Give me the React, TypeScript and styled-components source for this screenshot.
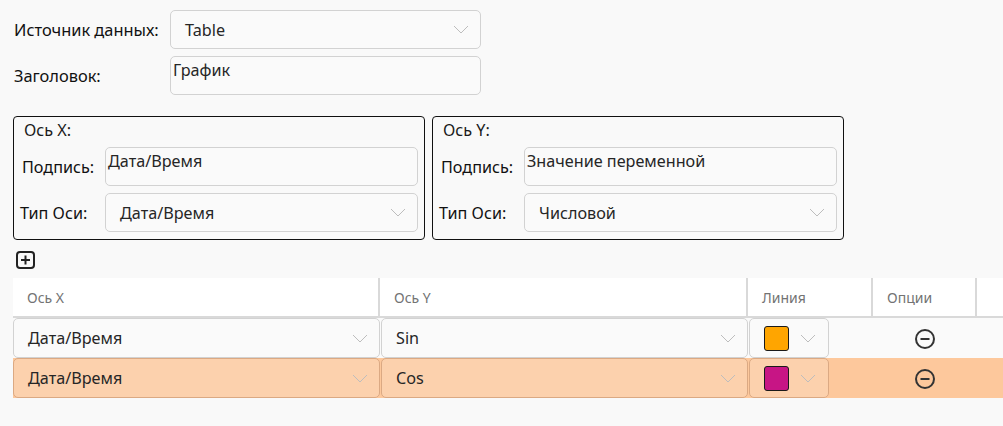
import React from "react";
import styled, { createGlobalStyle } from "styled-components";

const GlobalStyle = createGlobalStyle`
  html, body {
    margin: 0;
    padding: 0;
    background: #f9f9f9;
    font-family: "Noto Sans", "Open Sans", sans-serif;
    color: #1b1b1b;
    overflow: hidden;
  }
`;

const Page = styled.div`
  padding: 10px 0 0 13px;
  width: 990px;
`;

const FormRow = styled.div`
  display: grid;
  grid-template-columns: 157px 311px;
  align-items: center;
  margin-bottom: 7px;
`;

const Label = styled.div`
  font-size: 16.4px;
  padding-left: 1px;
  color: #111;
`;

const SelectBox = styled.div<{ $pad?: number; $tint?: boolean }>`
  box-sizing: border-box;
  height: 39px;
  border: 1px solid ${(p) => (p.$tint ? "#dba983" : "#d2d2d2")};
  border-radius: 5px;
  background: ${(p) => (p.$tint ? "#fcd1ad" : "#fafafa")};
  display: flex;
  align-items: center;
  justify-content: space-between;
  padding: 0 11px 0 ${(p) => p.$pad ?? 14}px;
  font-size: 16.2px;
  color: #262626;
`;

const TextBox = styled.div`
  box-sizing: border-box;
  height: 39px;
  border: 1px solid #d2d2d2;
  border-radius: 5px;
  background: #fafafa;
  padding: 2px 2px;
  font-size: 16.2px;
  color: #262626;
  line-height: 22px;
`;

const Chevron = () => (
  <svg width="16" height="9" viewBox="0 0 16 9" fill="none">
    <path d="M1 1 L8 8 L15 1" stroke="#bdbdbd" strokeWidth="1" />
  </svg>
);

const AxisRow = styled.div`
  display: flex;
  gap: 7px;
  margin-top: 21px;
`;

const AxisBox = styled.div`
  box-sizing: border-box;
  width: 412px;
  height: 124px;
  border: 1px solid #111;
  border-radius: 4px;
  padding: 3px 6px 7px 6px;
  display: flex;
  flex-direction: column;
`;

const AxisTitle = styled.div`
  font-size: 16.2px;
  padding-left: 4px;
  height: 27px;
  line-height: 20px;
`;

const AxisField = styled.div`
  display: grid;
  grid-template-columns: 85px 313px;
  align-items: center;
  margin-bottom: 7px;
  &:last-child {
    margin-bottom: 0;
  }
`;

const AxisLabel = styled.div<{ $shift?: number }>`
  font-size: 16.2px;
  padding-left: ${(p) => p.$shift ?? 2}px;
  color: #111;
  white-space: nowrap;
`;

const AddButton = styled.div`
  margin: 11px 0 0 3px;
  width: 19px;
  height: 18px;
`;

const Table = styled.div`
  margin-top: 9px;
  width: 990px;
`;

const HeaderRow = styled.div`
  display: grid;
  grid-template-columns: 367px 368px 125px 104px 1fr;
  background: #ffffff;
  height: 38px;
  border-bottom: 2px solid #d9d9d9;
`;

const HeaderCell = styled.div`
  box-sizing: border-box;
  border-right: 2px solid #d9d9d9;
  padding-left: 14px;
  font-size: 14px;
  color: #737373;
  display: flex;
  align-items: center;
  &:last-child {
    border-right: none;
  }
`;

const DataRow = styled.div<{ $selected?: boolean }>`
  display: grid;
  grid-template-columns: 367px 368px 125px 104px 1fr;
  height: 40px;
  background: ${(p) => (p.$selected ? "#fdc89c" : "#fafafa")};
`;

const Cell = styled.div`
  box-sizing: border-box;
  padding: 0 0 1px 1px;
  display: flex;
  &:first-child {
    padding-left: 0;
  }
`;

const RowSelect = styled(SelectBox)`
  flex: 1;
  height: 40px;
  border-radius: 5px;
  padding-left: 14px;
  padding-right: 11px;
`;

const ColorSelect = styled(SelectBox)`
  width: 80px;
  height: 40px;
  padding-left: 14px;
  padding-right: 12px;
`;

const Swatch = styled.div<{ $color: string }>`
  width: 23px;
  height: 23px;
  border: 1px solid #1a1a1a;
  border-radius: 3px;
  background: ${(p) => p.$color};
`;

const OptionCell = styled.div`
  display: flex;
  align-items: center;
  justify-content: center;
`;

const PlusIcon = () => (
  <svg width="19" height="18" viewBox="0 0 19 18" fill="none">
    <rect x="1" y="1" width="17" height="16" rx="3" stroke="#222" strokeWidth="2" />
    <path d="M9.5 4.5 V13.5 M5 9 H14" stroke="#222" strokeWidth="2" />
  </svg>
);

const MinusIcon = () => (
  <svg width="22" height="22" viewBox="0 0 22 22" fill="none">
    <circle cx="11" cy="11" r="9" stroke="#333" strokeWidth="2" />
    <path d="M6.5 11 H15.5" stroke="#333" strokeWidth="2" />
  </svg>
);

const rows = [
  { x: "Дата/Время", y: "Sin", color: "#ffa500", selected: false },
  { x: "Дата/Время", y: "Cos", color: "#c71585", selected: true },
];

export default function App() {
  return (
    <>
      <GlobalStyle />
      <Page>
        <FormRow>
          <Label>Источник данных:</Label>
          <SelectBox>
            <span>Table</span>
            <Chevron />
          </SelectBox>
        </FormRow>
        <FormRow>
          <Label>Заголовок:</Label>
          <TextBox>График</TextBox>
        </FormRow>

        <AxisRow>
          <AxisBox>
            <AxisTitle>Ось X:</AxisTitle>
            <AxisField>
              <AxisLabel $shift={2}>Подпись:</AxisLabel>
              <TextBox>Дата/Время</TextBox>
            </AxisField>
            <AxisField>
              <AxisLabel $shift={0}>Тип Оси:</AxisLabel>
              <SelectBox>
                <span>Дата/Время</span>
                <Chevron />
              </SelectBox>
            </AxisField>
          </AxisBox>
          <AxisBox>
            <AxisTitle>Ось Y:</AxisTitle>
            <AxisField>
              <AxisLabel $shift={2}>Подпись:</AxisLabel>
              <TextBox>Значение переменной</TextBox>
            </AxisField>
            <AxisField>
              <AxisLabel $shift={0}>Тип Оси:</AxisLabel>
              <SelectBox>
                <span>Числовой</span>
                <Chevron />
              </SelectBox>
            </AxisField>
          </AxisBox>
        </AxisRow>

        <AddButton>
          <PlusIcon />
        </AddButton>

        <Table>
          <HeaderRow>
            <HeaderCell>Ось X</HeaderCell>
            <HeaderCell>Ось Y</HeaderCell>
            <HeaderCell>Линия</HeaderCell>
            <HeaderCell>Опции</HeaderCell>
            <HeaderCell />
          </HeaderRow>
          {rows.map((r, i) => (
            <DataRow key={i} $selected={r.selected}>
              <Cell>
                <RowSelect $tint={r.selected}>
                  <span>{r.x}</span>
                  <Chevron />
                </RowSelect>
              </Cell>
              <Cell>
                <RowSelect $tint={r.selected}>
                  <span>{r.y}</span>
                  <Chevron />
                </RowSelect>
              </Cell>
              <Cell>
                <ColorSelect $tint={r.selected}>
                  <Swatch $color={r.color} />
                  <Chevron />
                </ColorSelect>
              </Cell>
              <OptionCell>
                <MinusIcon />
              </OptionCell>
              <div />
            </DataRow>
          ))}
        </Table>
      </Page>
    </>
  );
}
